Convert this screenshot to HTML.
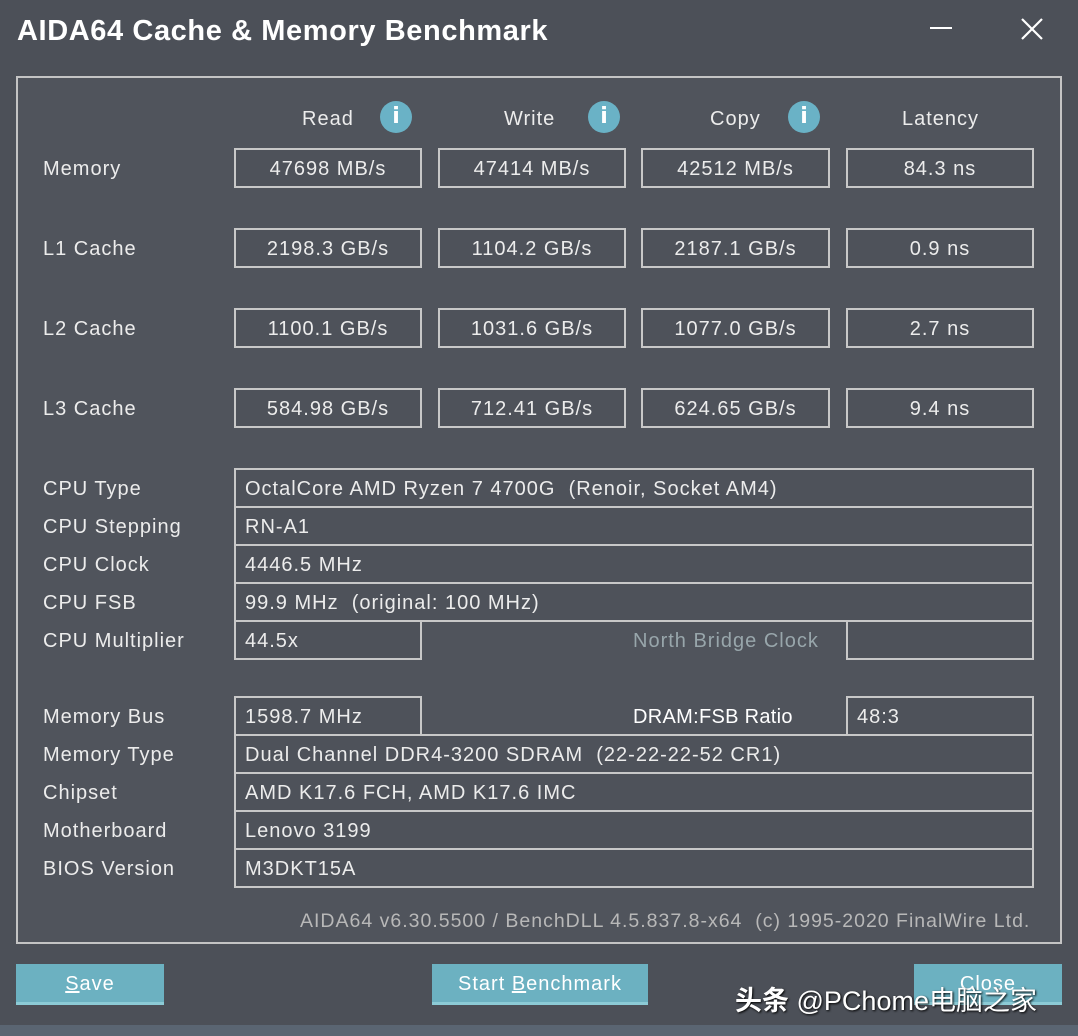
<!DOCTYPE html>
<html><head><meta charset="utf-8"><style>
*{margin:0;padding:0;box-sizing:border-box}
body{width:1078px;height:1036px;background:#4c5058;position:relative;overflow:hidden;font-family:"Liberation Sans","Noto Sans CJK SC",sans-serif;color:#ececec}
.a{position:absolute}
.t{position:absolute;font-size:20px;line-height:40px;white-space:nowrap;letter-spacing:1px}
.b{position:absolute;border:2px solid #c8c8c8;height:40px;font-size:20px;line-height:38px;white-space:nowrap;background:#4e525a;letter-spacing:1px}
.c{text-align:center}
.l{padding-left:9px}
.i{position:absolute;width:32px;height:32px;border-radius:50%;background:#6ab2c6;color:#fff;font-weight:bold;font-size:22px;line-height:32px;text-align:center;font-family:"DejaVu Sans",sans-serif}
.btn{position:absolute;top:964px;height:41px;background:#6cb1c1;border-bottom:3px solid #8ccbd6;color:#fff;font-size:20px;line-height:40px;text-align:center;letter-spacing:1px}
.btn u{text-decoration:underline}
</style></head><body>
<div class="a" style="left:17px;top:15px;font-size:29px;font-weight:bold;color:#fff;letter-spacing:0.6px">AIDA64 Cache &amp; Memory Benchmark</div>
<div class="a" style="left:930px;top:27px;width:22px;height:2px;background:#fff"></div>
<svg class="a" style="left:1020px;top:17px" width="24" height="24"><path d="M2 2L22 22M22 2L2 22" stroke="#fff" stroke-width="2.2"/></svg>
<div class="a" style="left:16px;top:76px;width:1046px;height:868px;border:2px solid #c4c4c4;background:#50545c"></div>

<div class="t" style="left:302px;top:99px">Read</div><div class="i" style="left:380px;top:101px">i</div>
<div class="t" style="left:504px;top:99px">Write</div><div class="i" style="left:588px;top:101px">i</div>
<div class="t" style="left:710px;top:99px">Copy</div><div class="i" style="left:788px;top:101px">i</div>
<div class="t" style="left:902px;top:99px">Latency</div>

<div class="t" style="left:43px;top:149px">Memory</div>
<div class="b c" style="left:234px;top:148px;width:188px">47698 MB/s</div>
<div class="b c" style="left:438px;top:148px;width:188px">47414 MB/s</div>
<div class="b c" style="left:641px;top:148px;width:189px">42512 MB/s</div>
<div class="b c" style="left:846px;top:148px;width:188px">84.3 ns</div>

<div class="t" style="left:43px;top:229px">L1 Cache</div>
<div class="b c" style="left:234px;top:228px;width:188px">2198.3 GB/s</div>
<div class="b c" style="left:438px;top:228px;width:188px">1104.2 GB/s</div>
<div class="b c" style="left:641px;top:228px;width:189px">2187.1 GB/s</div>
<div class="b c" style="left:846px;top:228px;width:188px">0.9 ns</div>

<div class="t" style="left:43px;top:309px">L2 Cache</div>
<div class="b c" style="left:234px;top:308px;width:188px">1100.1 GB/s</div>
<div class="b c" style="left:438px;top:308px;width:188px">1031.6 GB/s</div>
<div class="b c" style="left:641px;top:308px;width:189px">1077.0 GB/s</div>
<div class="b c" style="left:846px;top:308px;width:188px">2.7 ns</div>

<div class="t" style="left:43px;top:389px">L3 Cache</div>
<div class="b c" style="left:234px;top:388px;width:188px">584.98 GB/s</div>
<div class="b c" style="left:438px;top:388px;width:188px">712.41 GB/s</div>
<div class="b c" style="left:641px;top:388px;width:189px">624.65 GB/s</div>
<div class="b c" style="left:846px;top:388px;width:188px">9.4 ns</div>

<div class="t" style="left:43px;top:469px">CPU Type</div>
<div class="t" style="left:43px;top:507px">CPU Stepping</div>
<div class="t" style="left:43px;top:545px">CPU Clock</div>
<div class="t" style="left:43px;top:583px">CPU FSB</div>
<div class="t" style="left:43px;top:621px">CPU Multiplier</div>
<div class="b l" style="left:234px;top:468px;width:800px">OctalCore AMD Ryzen 7 4700G&nbsp; (Renoir, Socket AM4)</div>
<div class="b l" style="left:234px;top:506px;width:800px">RN-A1</div>
<div class="b l" style="left:234px;top:544px;width:800px">4446.5 MHz</div>
<div class="b l" style="left:234px;top:582px;width:800px">99.9 MHz&nbsp; (original: 100 MHz)</div>
<div class="b l" style="left:234px;top:620px;width:188px">44.5x</div>
<div class="a" style="left:422px;top:620px;width:424px;height:2px;background:#c8c8c8"></div>
<div class="t" style="left:633px;top:621px;color:#98a6ab">North Bridge Clock</div>
<div class="b" style="left:846px;top:620px;width:188px"></div>

<div class="t" style="left:43px;top:697px">Memory Bus</div>
<div class="t" style="left:43px;top:735px">Memory Type</div>
<div class="t" style="left:43px;top:773px">Chipset</div>
<div class="t" style="left:43px;top:811px">Motherboard</div>
<div class="t" style="left:43px;top:849px">BIOS Version</div>
<div class="b l" style="left:234px;top:734px;width:800px">Dual Channel DDR4-3200 SDRAM&nbsp; (22-22-22-52 CR1)</div>
<div class="b l" style="left:234px;top:772px;width:800px">AMD K17.6 FCH, AMD K17.6 IMC</div>
<div class="b l" style="left:234px;top:810px;width:800px">Lenovo 3199</div>
<div class="b l" style="left:234px;top:848px;width:800px">M3DKT15A</div>
<div class="b l" style="left:234px;top:696px;width:188px">1598.7 MHz</div>
<div class="t" style="left:633px;top:697px;color:#fff;letter-spacing:0.3px">DRAM:FSB Ratio</div>
<div class="b l" style="left:846px;top:696px;width:188px">48:3</div>

<div class="t" style="left:300px;top:901px;color:#b8b8b8;font-size:19.5px">AIDA64 v6.30.5500 / BenchDLL 4.5.837.8-x64&nbsp; (c) 1995-2020 FinalWire Ltd.</div>

<div class="btn" style="left:16px;width:148px"><u>S</u>ave</div>
<div class="btn" style="left:432px;width:216px">Start <u>B</u>enchmark</div>
<div class="btn" style="left:914px;width:148px">Close</div>
<div class="a" style="left:735px;top:979px;font-size:27px;color:#fff;font-weight:bold;text-shadow:1px 1px 2px #000;white-space:nowrap">头条 <span style="font-weight:normal">@PChome电脑之家</span></div>
<div class="a" style="left:0;top:1025px;width:1078px;height:11px;background:#5a6572"></div>
</body></html>
